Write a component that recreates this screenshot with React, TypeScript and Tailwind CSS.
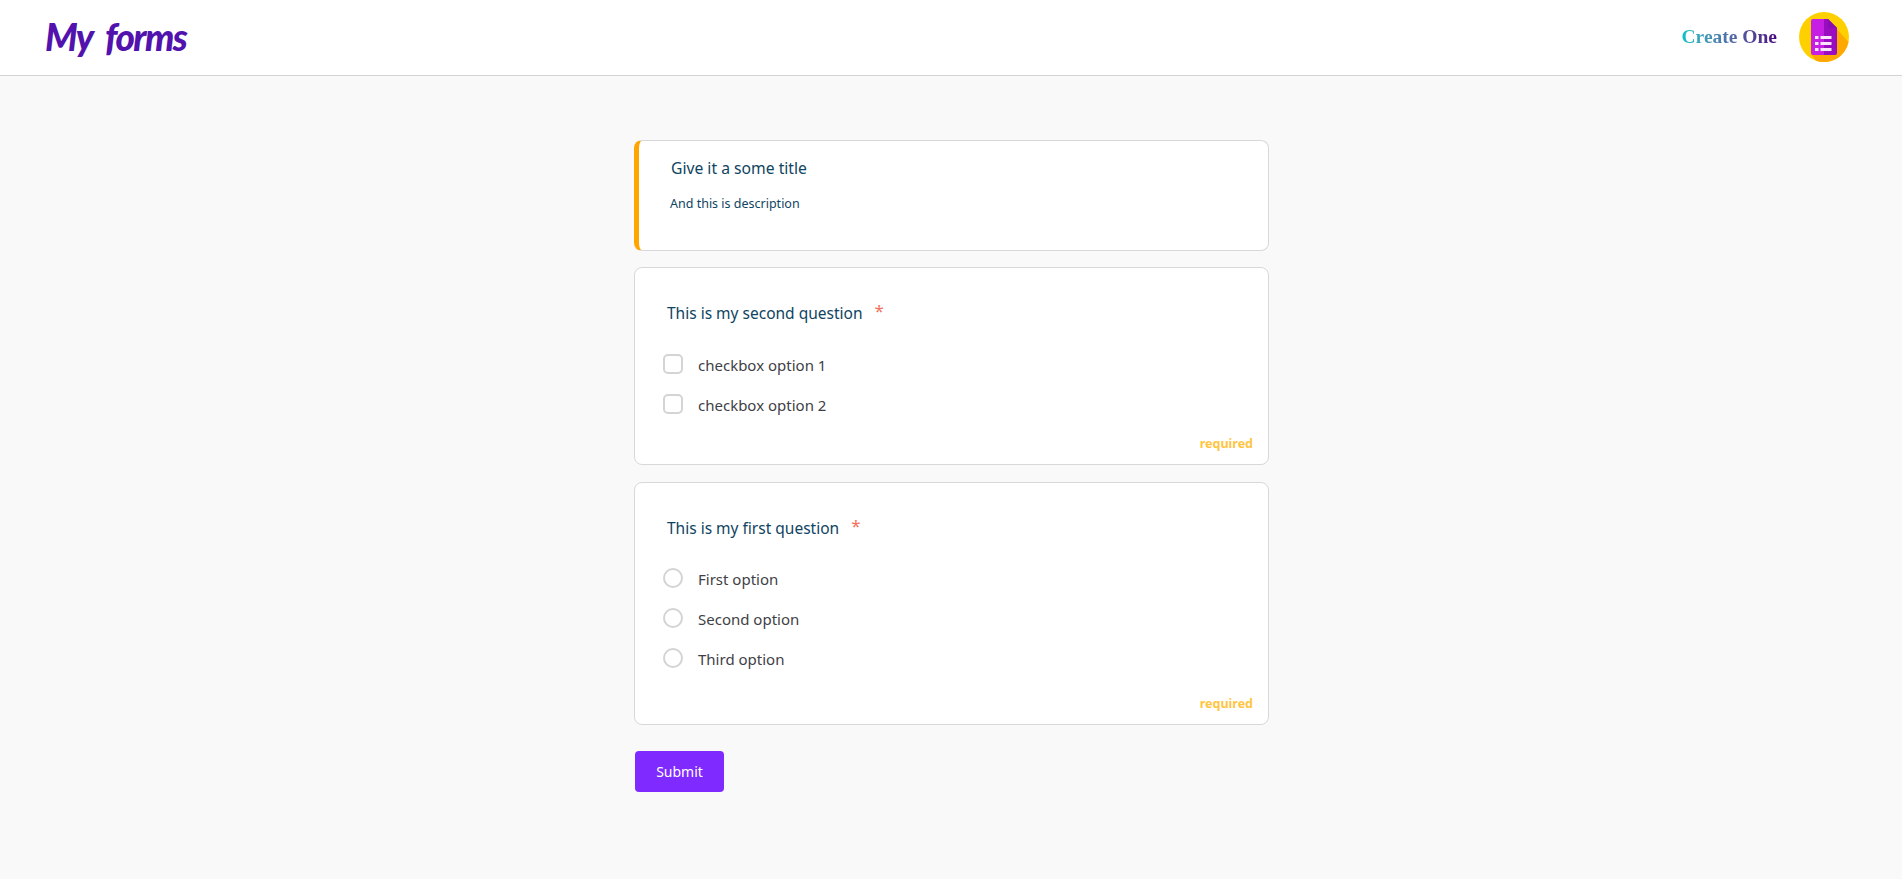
const FormsIcon = () => (
    <svg viewBox="0 0 50 50" className="w-[50px] h-[50px]">
        <circle cx="25" cy="25" r="25" fill="#ffd000" />
        <path d="M29 7 L49.5 30 A25 25 0 0 1 17 48.7 L12 42 Z" fill="#ffa800" />
        <path d="M14 7 H29 V43 H14 A2 2 0 0 1 12 41 V9 A2 2 0 0 1 14 7 Z" fill="#c61fe3" />
        <path d="M25 7 H29 L38 16 V41 A2 2 0 0 1 36 43 H25 Z" fill="#9a0cc0" />
        <path d="M29 7 L38 16 H31 A2 2 0 0 1 29 14 Z" fill="#8a0db0" />
        <g fill="#fbe3ff">
            <rect x="16" y="24" width="3.5" height="3" />
            <rect x="21.5" y="24" width="11" height="3" />
            <rect x="16" y="30" width="3.5" height="3" />
            <rect x="21.5" y="30" width="11" height="3" />
            <rect x="16" y="36" width="3.5" height="3" />
            <rect x="21.5" y="36" width="11" height="3" />
        </g>
    </svg>
);

const Header = () => (
    <header className="h-[76px] bg-white border-b border-[#d4d4d4] flex items-center justify-between pl-[45px] pr-[53px]">
        <h1 className="font-['Lato',sans-serif] italic font-black text-[37px] leading-none text-[#5212ad] tracking-[-1.6px] [word-spacing:7px] pb-[3px]">
            My forms
        </h1>
        <div className="flex items-center gap-[22px] pb-[1px]">
            <span className="font-['Liberation_Serif',serif] font-bold text-[19.5px] bg-gradient-to-r from-[#00c2c7] to-[#4b0082] bg-clip-text text-transparent">
                Create One
            </span>
            <FormsIcon />
        </div>
    </header>
);

const Required = () => (
    <p className="text-right text-[12.5px] leading-4 font-bold text-[#ffc542] pr-[15px]">required</p>
);

const Question = ({ title }: { title: string }) => (
    <h2 className="flex items-start gap-[12px] text-[15.5px] leading-6 text-[#0f4462]">
        {title}
        <span className="text-[#f5705c] text-[17px] leading-5">*</span>
    </h2>
);

const Option = ({ label, round }: { label: string; round?: boolean }) => (
    <label className="h-10 flex items-center gap-[15px] text-[15px] text-[#3f3f46]">
        <span className={`w-5 h-5 -mt-[2px] bg-white border-2 border-[#d4d4d4] ${round ? "rounded-full" : "rounded-[5px]"}`} />
        {label}
    </label>
);

const App = () => {
    return (
        <div className="min-h-[879px] bg-[#f9f9f9] font-['Noto_Sans',sans-serif]">
            <Header />
            <main className="w-[635px] ml-[634px] pt-[64px] flex flex-col">
                <section className="h-[111px] bg-white border border-[#d8d8d8] border-l-[5px] border-l-[#ffa500] rounded-lg pl-[32px] pt-[15px]">
                    <h2 className="text-[15.7px] leading-6 text-[#0f4462]">Give it a some title</h2>
                    <p className="text-[12.5px] leading-5 text-[#0f4462] mt-[14px] -ml-[1px]">And this is description</p>
                </section>
                <section className="h-[198px] mt-[16px] bg-white border border-[#d8d8d8] rounded-lg pl-[32px] pt-[33px]">
                    <Question title="This is my second question" />
                    <div className="mt-[20px] -ml-[4px] flex flex-col">
                        <Option label="checkbox option 1" />
                        <Option label="checkbox option 2" />
                    </div>
                    <div className="mt-[11px]">
                        <Required />
                    </div>
                </section>
                <section className="h-[243px] mt-[17px] bg-white border border-[#d8d8d8] rounded-lg pl-[32px] pt-[33px]">
                    <Question title="This is my first question" />
                    <div className="mt-[19px] -ml-[4px] flex flex-col">
                        <Option label="First option" round />
                        <Option label="Second option" round />
                        <Option label="Third option" round />
                    </div>
                    <div className="mt-[17px]">
                        <Required />
                    </div>
                </section>
                <button className="w-[89px] h-[41px] mt-[26px] ml-[1px] rounded-[4px] bg-[#7f2aff] text-white text-[14px]">
                    Submit
                </button>
            </main>
        </div>
    );
};

export default App;
